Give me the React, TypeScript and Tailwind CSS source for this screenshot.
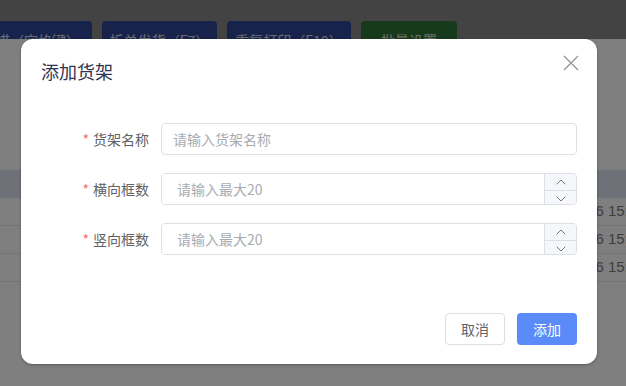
import { ChevronUp, ChevronDown } from "lucide-react";

const cjk = { fontFamily: '"Noto Sans CJK SC", "Noto Sans", sans-serif' };

const toolbar = [
  { label: "批量扫描（空格键）", w: "w-[150px] -ml-[58px]", color: "bg-[#2e4694]" },
  { label: "拆单发货（F7）", w: "w-[115px]", color: "bg-[#2e4694]" },
  { label: "重复打印（F10）", w: "w-[124px]", color: "bg-[#2e4694]" },
  { label: "批量设置", w: "w-[96px]", color: "bg-[#2e7438]" },
];

const rows = ["2024-03-06 15:21:08", "2024-03-06 15:20:44", "2024-03-06 15:18:12"];

const NumberField = () => (
  <div className="flex-1 h-8 flex border border-[#dcdfe6] rounded-[4px] overflow-hidden">
    <input
      className="flex-1 pl-[15px] text-sm text-[#606266] placeholder:text-[#a8abb2] outline-none bg-white"
      placeholder="请输入最大20"
      style={cjk}
    />
    <div className="w-[32px] flex flex-col border-l border-[#dcdfe6] bg-[#f5f7fa] text-[#606266]">
      <div className="flex-1 flex items-center justify-center border-b border-[#dcdfe6]">
        <ChevronUp className="w-4 h-4" strokeWidth={1.3} />
      </div>
      <div className="flex-1 flex items-center justify-center">
        <ChevronDown className="w-4 h-4" strokeWidth={1.3} />
      </div>
    </div>
  </div>
);

const FormRow = ({ label, children }: { label: string; children: React.ReactNode }) => (
  <div className="flex items-center">
    <label className="w-[120px] pr-3 text-right text-sm text-[#606266]">
      <span className="text-[#f56c6c] mr-1">*</span>
      {label}
    </label>
    {children}
  </div>
);

export default function App() {
  return (
    <div className="relative w-[626px] h-[386px] bg-white overflow-hidden" style={cjk}>
      {/* page underneath */}
      <div className="h-[39px] bg-[#868686] overflow-hidden flex gap-[10px] pt-[21px]">
        {toolbar.map((b) => (
          <button
            key={b.label}
            className={`${b.w} ${b.color} shrink-0 h-[38px] rounded-[4px] text-sm text-white/80 flex items-center justify-center`}
          >
            {b.label}
          </button>
        ))}
      </div>
      <div className="mt-[131px]">
        <div className="h-[28px] bg-[#dce2f0]" />
        {rows.map((r) => (
          <div key={r} className="h-[28px] border-b border-[#e8e8e8] flex items-center">
            <span
              className="ml-[527px] text-[15px] text-[#7a7a7a] whitespace-nowrap"
              style={{ fontFamily: '"Liberation Sans", sans-serif' }}
            >
              {r}
            </span>
          </div>
        ))}
      </div>

      {/* overlay + dialog */}
      <div className="absolute inset-0 z-10 bg-black/50 pt-[39px] pl-[21px]">
        <div className="relative w-[576px] h-[325px] bg-white rounded-xl shadow-[0_1px_3px_rgba(0,0,0,0.3)] px-5">
          <div className="pt-5 text-lg leading-6 text-[#2f3552]">添加货架</div>
          <button className="absolute top-[16px] right-[18px] text-[#909399]">
            <svg width="16" height="16" viewBox="0 0 16 16" fill="none" stroke="currentColor" strokeWidth="1.3">
              <path d="M1 1L15 15M15 1L1 15" />
            </svg>
          </button>

          <div className="mt-10 flex flex-col gap-[18px]">
            <FormRow label="货架名称">
              <input
                className="flex-1 h-8 border border-[#dcdfe6] rounded-[4px] px-[11px] text-sm text-[#606266] placeholder:text-[#a8abb2] outline-none"
                placeholder="请输入货架名称"
                style={cjk}
              />
            </FormRow>
            <FormRow label="横向框数">
              <NumberField />
            </FormRow>
            <FormRow label="竖向框数">
              <NumberField />
            </FormRow>
          </div>

          <div className="mt-[58px] flex justify-end gap-3">
            <button className="w-[60px] h-8 border border-[#dcdfe6] rounded-[4px] text-sm text-[#606266] bg-white">
              取消
            </button>
            <button className="w-[60px] h-8 rounded-[4px] text-sm text-white bg-[#5a8bf9]">
              添加
            </button>
          </div>
        </div>
      </div>
    </div>
  );
}
